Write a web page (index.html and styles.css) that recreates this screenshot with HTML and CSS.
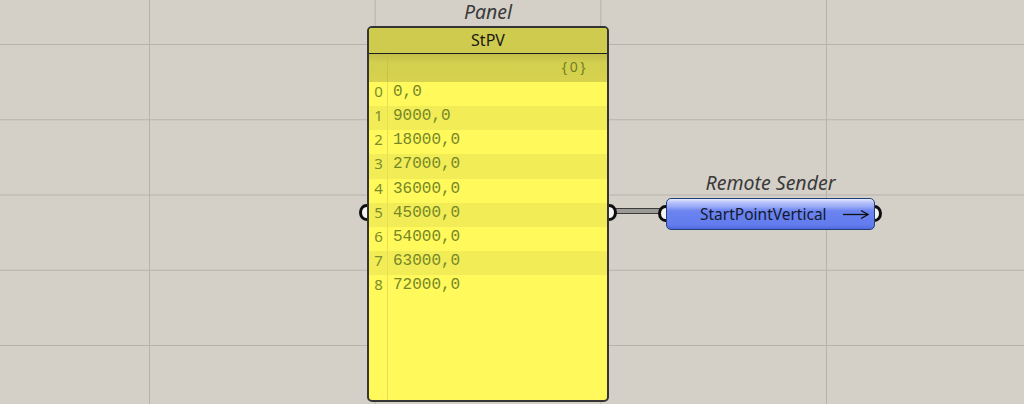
FILE: index.html
```html
<!DOCTYPE html>
<html>
<head>
<meta charset="utf-8">
<link rel="stylesheet" href="styles.css">
</head>
<body>
<div class="canvas">
  <div class="wire"></div>

  <span class="grip grip-panel-in"></span>
  <span class="grip grip-panel-out"></span>
  <span class="grip grip-send-in"></span>
  <span class="grip grip-send-out"></span>

  <div class="node panel-node">
    <div class="node-title">Panel</div>
    <div class="panel">
      <div class="panel-head">StPV</div>
      <div class="panel-body">
        <div class="path-row">
          <span class="idx"></span>
          <span class="path">{0}</span>
        </div>
        <div class="row"><span class="idx">0</span><span class="val">0,0</span></div>
        <div class="row alt"><span class="idx">1</span><span class="val">9000,0</span></div>
        <div class="row"><span class="idx">2</span><span class="val">18000,0</span></div>
        <div class="row alt"><span class="idx">3</span><span class="val">27000,0</span></div>
        <div class="row"><span class="idx">4</span><span class="val">36000,0</span></div>
        <div class="row alt"><span class="idx">5</span><span class="val">45000,0</span></div>
        <div class="row"><span class="idx">6</span><span class="val">54000,0</span></div>
        <div class="row alt"><span class="idx">7</span><span class="val">63000,0</span></div>
        <div class="row"><span class="idx">8</span><span class="val">72000,0</span></div>
        <div class="row filler"><span class="idx"></span><span class="val"></span></div>
      </div>
    </div>
  </div>

  <div class="node sender-node">
    <div class="node-title">Remote Sender</div>
    <div class="sender">
      <span class="sender-label">StartPointVertical</span>
      <svg class="arrow" width="26" height="10" viewBox="0 0 26 10">
        <path d="M0 5.5 H24.5" stroke="#111" stroke-width="1.3" fill="none"/>
        <path d="M18 1.5 L25 5.5 L18 9.5" stroke="#111" stroke-width="1.3" fill="none"/>
      </svg>
    </div>
  </div>
</div>
</body>
</html>
```

FILE: styles.css
```css
html, body {
  margin: 0;
  padding: 0;
}

body {
  width: 1024px;
  height: 404px;
  overflow: hidden;
  font-family: "Noto Sans", "Open Sans", sans-serif;
}

.canvas {
  position: relative;
  width: 1024px;
  height: 404px;
  background-color: #d4d0c8;
  background-image:
    linear-gradient(to right, #b7b3ab 0, #b7b3ab 1px, transparent 1px),
    linear-gradient(to bottom, #b7b3ab 0, #b7b3ab 1px, transparent 1px);
  background-size: 225.67px 100%, 100% 75.25px;
  background-position: 149px 0, 0 44px;
}

/* nodes on the free canvas */
.node {
  position: absolute;
  display: flex;
  flex-direction: column;
  z-index: 2;
}

.node-title {
  font-style: italic;
  color: #3a3a3a;
  text-align: center;
  font-size: 19.5px;
  white-space: nowrap;
}

.panel-node {
  left: 367px;
  top: 0;
  width: 242px;
}

.panel-node .node-title {
  height: 26px;
  line-height: 24px;
}

.panel {
  height: 376px;
  box-sizing: border-box;
  border: 2px solid #343434;
  border-radius: 5px;
  background: #fff95c;
  display: flex;
  flex-direction: column;
  overflow: hidden;
}

.panel-head {
  height: 25px;
  line-height: 25px;
  text-align: center;
  font-size: 16px;
  color: #1a1a1a;
  background: #cfcb4f;
  border-bottom: 1.5px solid #1e1e1e;
}

.panel-body {
  flex: 1;
  display: flex;
  flex-direction: column;
}

.path-row {
  height: 28px;
  display: flex;
  background: linear-gradient(to bottom, #c2be49 0, #d3cf4f 9px, #d7d34f 100%);
}

.path-row .idx {
  border-right-color: #c6c24a;
}

.path {
  flex: 1;
  text-align: right;
  padding-right: 19px;
  font-size: 14px;
  line-height: 25px;
  color: #6f7f22;
  letter-spacing: 2.5px;
}

.row {
  height: 24.15px;
  display: flex;
  align-items: stretch;
}

.row.alt {
  background: #f2ed57;
}

.row.filler {
  flex: 1;
}

.idx {
  width: 19px;
  flex: none;
  box-sizing: border-box;
  border-right: 1px solid #e6e052;
  padding-top: 1px;
  padding-left: 1px;
  text-align: center;
  font-size: 15px;
  line-height: 16px;
  color: #7d8d2c;
}

.val {
  padding-left: 5px;
  padding-top: 2px;
  font-family: "Liberation Mono", "Courier New", monospace;
  font-size: 16px;
  line-height: 16px;
  color: #758727;
}

/* remote sender */
.sender-node {
  left: 666px;
  top: 170px;
  width: 209px;
}

.sender-node .node-title {
  height: 28px;
  line-height: 26px;
}

.sender {
  height: 32px;
  box-sizing: border-box;
  border: 1.5px solid #22407c;
  border-radius: 5px;
  background: linear-gradient(to bottom, #e6eaff 0, #bcc6fb 3px, #95a6f6 8px, #6b84f0 12px, #627cee 26px, #5069db 100%);
  display: flex;
  align-items: center;
  padding-left: 33px;
  padding-right: 5px;
}

.sender-label {
  font-size: 15.5px;
  color: #141a2e;
  white-space: nowrap;
}

.arrow {
  margin-left: auto;
  display: block;
}

/* wire and grips */
.wire {
  position: absolute;
  left: 610px;
  top: 207.5px;
  width: 54px;
  height: 4px;
  background: #9c9a96;
  border-top: 1.5px solid #3c3c3c;
  border-bottom: 1.5px solid #3c3c3c;
  z-index: 1;
}

.grip {
  position: absolute;
  width: 9px;
  height: 11px;
  border: 3px solid #0e0e0e;
  border-radius: 50%;
  background: #f4f4f4;
  z-index: 1;
}

.grip-panel-in { left: 359px; top: 204px; }
.grip-panel-out { left: 602px; top: 204px; }
.grip-send-in { left: 658px; top: 205px; }
.grip-send-out { left: 867px; top: 205px; }
```
